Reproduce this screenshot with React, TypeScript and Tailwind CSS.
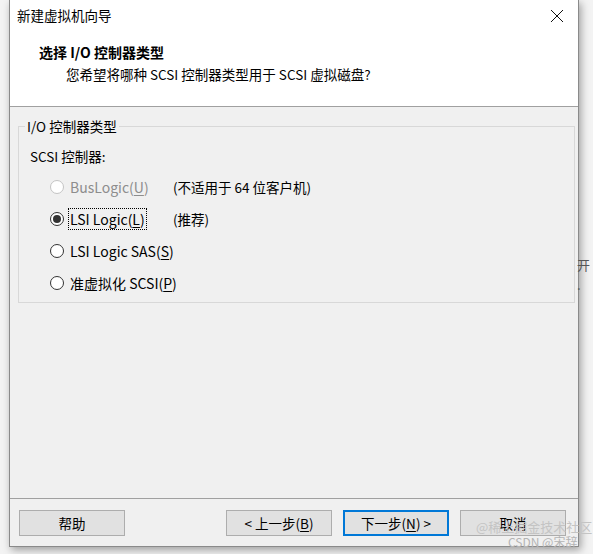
import React from "react";

const font = "font-['Noto_Sans_CJK_SC','Noto_Sans',sans-serif]";

function Radio({ checked, disabled }: { checked?: boolean; disabled?: boolean }) {
  return (
    <span
      className={`flex h-[14px] w-[14px] shrink-0 items-center justify-center rounded-full border bg-white ${
        disabled ? "border-[#c4c4c4] bg-[#f4f4f4]" : "border-[#333333]"
      }`}
    >
      {checked && <span className="h-[8px] w-[8px] rounded-full bg-[#333333]" />}
    </span>
  );
}

function Option({
  label,
  mnemonic,
  note,
  checked,
  disabled,
  focused,
}: {
  label: string;
  mnemonic: string;
  note?: string;
  checked?: boolean;
  disabled?: boolean;
  focused?: boolean;
}) {
  return (
    <div className="flex h-[32px] items-center">
      <div className="flex w-[124px] items-center gap-[4px]">
        <Radio checked={checked} disabled={disabled} />
        <span
          className={`whitespace-nowrap px-[1px] text-[14px] leading-[20px] ${
            focused ? "border border-dotted border-black" : "border border-transparent"
          } ${disabled ? "text-[#8d8d8d]" : "text-black"}`}
        >
          {label}(<span className="underline underline-offset-2">{mnemonic}</span>)
        </span>
      </div>
      {note && <span className="ml-[-1px] whitespace-nowrap text-black">{note}</span>}
    </div>
  );
}

function Button({ children, primary }: { children: React.ReactNode; primary?: boolean }) {
  return (
    <div
      className={`flex h-[26px] w-[106px] items-center justify-center bg-[#e1e1e1] text-black ${
        primary ? "border-2 border-[#0078d7]" : "border border-[#adadad]"
      }`}
    >
      {children}
    </div>
  );
}

export default function App() {
  return (
    <div className={`relative h-[554px] w-[593px] overflow-hidden bg-[#f3f3f3] text-[13.5px] ${font}`}>
      <div className="ml-[9px] flex h-[547px] w-[570px] flex-col border-x border-b border-x-[#8a8a8a] border-b-[#8a8a8a] bg-[#f0f0f0] shadow-[2px_3px_8px_rgba(0,0,0,0.35)]">
        {/* title bar */}
        <div className="flex h-[31px] items-center justify-between bg-white pl-[7px] pr-[14px]">
          <span className="text-black">新建虚拟机向导</span>
          <svg width="14" height="14" viewBox="0 0 14 14">
            <path d="M1 1L13 13M13 1L1 13" stroke="#111" strokeWidth="1" />
          </svg>
        </div>
        {/* header */}
        <div className="h-[76px] border-b border-[#a0a0a0] bg-white pt-[10px]">
          <div className="pl-[29px] text-[14px] font-bold leading-[22px] text-black">选择 I/O 控制器类型</div>
          <div className="pl-[56px] leading-[22px] text-black">您希望将哪种 SCSI 控制器类型用于 SCSI 虚拟磁盘?</div>
        </div>
        {/* body */}
        <div className="flex-1 px-[8px] pt-[19px]">
          <div className="relative h-[177px] w-[557px] border border-[#d8d8d8]">
            <span className="absolute left-[6px] top-[-11px] bg-[#f0f0f0] px-[2px] leading-[20px] text-black">
              I/O 控制器类型
            </span>
            <div className="pl-[11px] pt-[19px] leading-[20px] text-black">SCSI 控制器:</div>
            <div className="pl-[31px] pt-[5px]">
              <Option label="BusLogic" mnemonic="U" note="(不适用于 64 位客户机)" disabled />
              <Option label="LSI Logic" mnemonic="L" note="(推荐)" checked focused />
              <Option label="LSI Logic SAS" mnemonic="S" />
              <Option label="准虚拟化 SCSI" mnemonic="P" />
            </div>
          </div>
        </div>
        {/* footer */}
        <div className="flex h-[48px] items-start border-t border-[#a0a0a0] pl-[9px] pr-[12px] pt-[11px]">
          <Button>帮助</Button>
          <div className="flex-1" />
          <div className="flex gap-[11px]">
            <Button>
              &lt; 上一步(<span className="underline underline-offset-2">B</span>)
            </Button>
            <Button primary>
              下一步(<span className="underline underline-offset-2">N</span>) &gt;
            </Button>
            <Button>取消</Button>
          </div>
        </div>
      </div>
      <span className="absolute left-[577px] top-[255px] text-[13px] text-[#555]">开 .</span>
      <span className="absolute left-[476px] top-[519px] text-[13px] leading-[16px] text-[#c4c4c4]">@稀土掘金技术社区</span>
      <span className="absolute left-[508px] top-[535px] text-[12px] leading-[14px] text-[#b4b4b4]">CSDN @宋辞</span>
    </div>
  );
}
